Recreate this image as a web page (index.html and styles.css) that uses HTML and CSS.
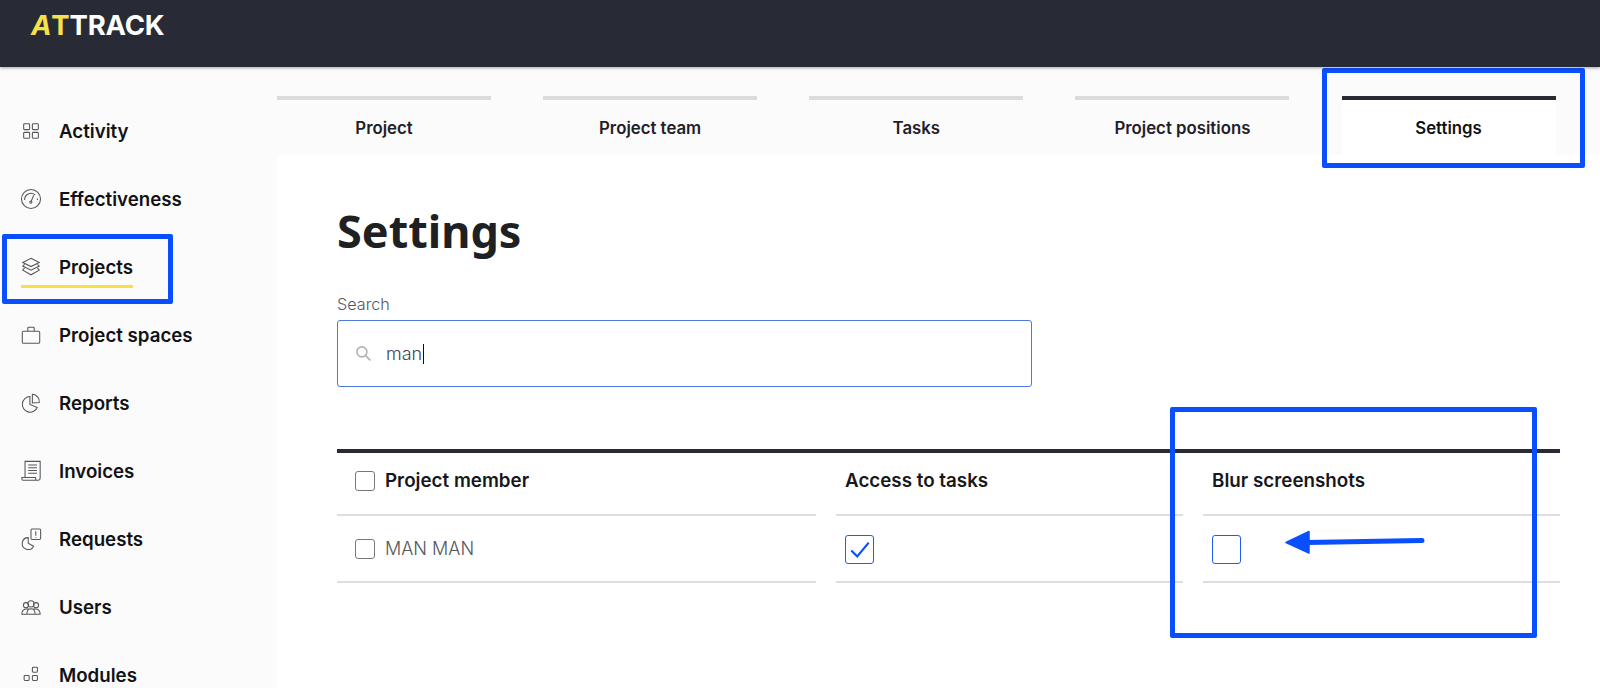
FILE: index.html
```html
<!DOCTYPE html>
<html lang="en">
<head>
<meta charset="utf-8">
<title>Attrack - Settings</title>
<link rel="stylesheet" href="styles.css">
</head>
<body>
<div class="app">
  <header class="topbar">
    <div class="logo"><span class="logo-a">A</span><span class="logo-t">T</span>TRACK</div>
  </header>
  <div class="layout">
    <aside class="sidebar">
      <nav class="nav">
        <a class="nav-item">
          <svg class="nav-icon" viewBox="0 0 24 24"><rect x="4" y="4" width="6.5" height="6.5" rx="1"/><rect x="13.5" y="4" width="6.5" height="6.5" rx="1"/><rect x="4" y="13.5" width="6.5" height="6.5" rx="1"/><rect x="13.5" y="13.5" width="6.5" height="6.5" rx="1"/></svg>
          <span class="nav-label">Activity</span>
        </a>
        <a class="nav-item">
          <svg class="nav-icon" viewBox="0 0 24 24"><circle cx="12" cy="12" r="10.4"/><path d="M5 13a7 7 0 0 1 11.500-5.500M19 11.500v1.500M15 8l-2.800 6.500"/><circle cx="11.800" cy="15.400" r="1.200"/></svg>
          <span class="nav-label">Effectiveness</span>
        </a>
        <a class="nav-item">
          <svg class="nav-icon" viewBox="0 0 24 24"><path d="M12 2.500l9 4.500-9 4.500-9-4.500z"/><path d="M5 9l-2 2 9 4.500 9-4.500-2-2"/><path d="M5 13l-2 2.500 9 5 9-5-2-2.500"/></svg>
          <span class="nav-label nav-label-active">Projects</span>
        </a>
        <a class="nav-item">
          <svg class="nav-icon" viewBox="0 0 24 24"><rect x="2.500" y="8" width="19" height="13" rx="1.500"/><path d="M8.500 8V4.500a1 1 0 0 1 1-1h5a1 1 0 0 1 1 1V8"/></svg>
          <span class="nav-label">Project spaces</span>
        </a>
        <a class="nav-item">
          <svg class="nav-icon" viewBox="0 0 24 24"><path d="M10.800 5a8.500 8.500 0 1 0 8 12L10.800 13.500z"/><path d="M13.500 2.500a8 8 0 0 1 7.500 9l-7.500.5z"/></svg>
          <span class="nav-label">Reports</span>
        </a>
        <a class="nav-item">
          <svg class="nav-icon" viewBox="0 0 24 24"><path d="M5.500 19V1.500h16.500V20a2 2 0 0 1-2 2H3.500a1.500 1.500 0 0 1-1.500-1.500V19h15v1.500a1.500 1.500 0 0 0 1.500 1.500"/><path d="M9 5.500h9.500M9 8.500h9.500M9 11.500h9.500M9 14.500h9.500"/></svg>
          <span class="nav-label">Invoices</span>
        </a>
        <a class="nav-item">
          <svg class="nav-icon" viewBox="0 0 24 24"><rect x="12" y="1" width="10.500" height="11.500" rx="1.200"/><path d="M17.200 3.500v5M17.200 10v.8"/><path d="M9 10.500a6.500 6.500 0 1 0 5.800 9.400L9 16.500z"/></svg>
          <span class="nav-label">Requests</span>
        </a>
        <a class="nav-item">
          <svg class="nav-icon" viewBox="0 0 24 24"><circle cx="6.500" cy="10" r="2.800"/><circle cx="17.500" cy="10" r="2.800"/><circle cx="12" cy="8.500" r="3.400"/><path d="M2 20c0-3 1.500-5.500 4.500-5.800h11c3 .3 4.500 2.800 4.500 5.800zM7.500 20c0-3 1.500-6 4.500-6s4.500 3 4.500 6"/></svg>
          <span class="nav-label">Users</span>
        </a>
        <a class="nav-item">
          <svg class="nav-icon" viewBox="0 0 24 24"><rect x="4.500" y="12.500" width="5.500" height="5.500" rx="1"/><rect x="13.500" y="12.500" width="5.500" height="5.500" rx="1"/><rect x="13.500" y="3.500" width="5.500" height="5.500" rx="1"/></svg>
          <span class="nav-label">Modules</span>
        </a>
      </nav>
    </aside>
    <main class="main">
      <div class="tabs">
        <a class="tab">Project</a>
        <a class="tab">Project team</a>
        <a class="tab">Tasks</a>
        <a class="tab">Project positions</a>
        <a class="tab tab-active">Settings</a>
      </div>
      <section class="content">
        <h1 class="title">Settings</h1>
        <label class="search-label">Search</label>
        <div class="search-box">
          <svg class="search-icon" viewBox="0 0 16 16"><circle cx="6.500" cy="6.500" r="4.700"/><path d="M10 10l4.500 4.500"/></svg>
          <span class="search-value">man</span><span class="caret"></span>
        </div>
        <div class="members">
          <div class="cell cell-head"><span class="check"></span>Project member</div>
          <div class="cell cell-head">Access to tasks</div>
          <div class="cell cell-head">Blur screenshots</div>
          <div class="cell cell-row"><span class="check"></span><span class="member-name">MAN MAN</span></div>
          <div class="cell cell-row">
            <span class="toggle"><svg class="tick" viewBox="0 0 24 24"><path d="M2.500 12.500l6.500 6.500L21.500 4"/></svg></span>
          </div>
          <div class="cell cell-row"><span class="toggle"></span></div>
        </div>
      </section>
    </main>
  </div>
  <div class="mark mark-settings"></div>
  <div class="mark mark-projects"></div>
  <div class="mark mark-blur"></div>
  <svg class="mark-arrow" viewBox="0 0 140 26"><path d="M1 13.500L24 2.500V24z" class="arrow-head"/><path d="M22 13.500L137 11.500" class="arrow-line"/></svg>
</div>
</body>
</html>
```

FILE: styles.css
```css
* { box-sizing: border-box; }
html, body { margin: 0; padding: 0; }
body {
  font-family: Inter, "Liberation Sans", sans-serif;
  color: #17181c;
  background: #fff;
}
.app {
  position: relative;
  width: 1600px;
  height: 688px;
  overflow: hidden;
}
.topbar {
  position: relative;
  z-index: 1;
  height: 67px;
  background: #282b35;
  box-shadow: 0 1px 3px rgba(0, 0, 0, .35);
  padding: 11px 0 0 31px;
}
.logo {
  font-size: 27.500px;
  line-height: 28px;
  font-weight: 700;
  letter-spacing: -.2px;
  color: #fff;
}
.logo-a { color: #f7e14a; font-style: italic; }
.logo-t { color: #f7e14a; }
.layout { display: flex; height: 621px; }
.sidebar {
  width: 277px;
  flex: none;
  background: #fbfbfb;
  padding-top: 30px;
}
.nav { display: flex; flex-direction: column; }
.nav-item {
  display: flex;
  align-items: center;
  gap: 17px;
  height: 68px;
  padding-left: 20px;
}
.nav-icon {
  width: 22px;
  height: 22px;
  flex: none;
  fill: none;
  stroke: #55565c;
  stroke-width: 1.150;
}
.nav-label {
  position: relative;
  font-size: 18.700px;
  font-weight: 600;
  color: #111216;
}
.nav-label-active::after {
  content: "";
  position: absolute;
  left: -38px;
  right: 0;
  bottom: -9px;
  height: 3px;
  background: #f9e04b;
}
.main { flex: 1; min-width: 0; }
.tabs {
  display: flex;
  gap: 52.150px;
  height: 88px;
  padding-top: 29px;
  background: #fbfbfb;
}
.tab {
  width: 214px;
  height: 59px;
  border-top: 4px solid #dcdcdc;
  padding-top: 19px;
  text-align: center;
  font-size: 16.800px;
  line-height: 18px;
  font-weight: 600;
  color: #1f2028;
}
.tab-active {
  border-top-color: #282b35;
  background: #fff;
  color: #101114;
}
.content { padding: 0 40px 0 60px; }
.title {
  margin: 45px 0 0;
  font-family: "Noto Sans", sans-serif;
  font-size: 45px;
  line-height: 62px;
  font-weight: 700;
  color: #1f2023;
}
.search-label {
  display: block;
  margin-top: 32px;
  font-size: 16.200px;
  line-height: 20px;
  font-weight: 300;
  color: #55565c;
}
.search-box {
  display: flex;
  align-items: center;
  width: 695px;
  height: 67px;
  margin-top: 6px;
  padding-left: 17px;
  border: 1px solid #4d78e0;
  border-radius: 3px;
}
.search-icon {
  width: 17px;
  height: 17px;
  margin-right: 14px;
  fill: none;
  stroke: #b3b3b3;
  stroke-width: 1.500;
}
.search-value {
  font-size: 18px;
  font-weight: 300;
  color: #44454a;
}
.caret {
  width: 1px;
  height: 20px;
  margin-left: 1px;
  background: #111;
}
.members {
  display: grid;
  grid-template-columns: 479px 347px 357px;
  column-gap: 20px;
  width: 1223px;
  margin-top: 62px;
  border-top: 4px solid #282b35;
}
.cell {
  display: flex;
  align-items: center;
  border-bottom: 2px solid #dedede;
}
.cell-head {
  height: 63px;
  padding-left: 9px;
  padding-bottom: 6px;
  font-size: 18.800px;
  font-weight: 600;
  color: #17181c;
}
.cell-head:first-child { padding-left: 18px; }
.cell-row {
  height: 67px;
  padding-left: 9px;
  padding-top: 2px;
}
.cell-row:nth-child(4) { padding-left: 18px; padding-top: 0; }
.check {
  width: 20px;
  height: 20px;
  flex: none;
  margin-right: 10px;
  border: 1.500px solid #77787d;
  border-radius: 3px;
}
.member-name {
  font-size: 18px;
  font-weight: 300;
  color: #55565c;
}
.toggle {
  display: flex;
  align-items: center;
  justify-content: center;
  width: 29px;
  height: 29px;
  border: 1px solid #1c5df5;
  border-radius: 3px;
}
.tick {
  width: 22px;
  height: 22px;
  fill: none;
  stroke: #0a50ff;
  stroke-width: 2.400;
}
.mark {
  position: absolute;
  border: 5px solid #0a4fff;
  border-radius: 2px;
}
.mark-settings { left: 1322px; top: 68px; width: 263px; height: 100px; }
.mark-projects { left: 2px; top: 234px; width: 171px; height: 70px; }
.mark-blur { left: 1170px; top: 407px; width: 367px; height: 231px; }
.mark-arrow {
  position: absolute;
  left: 1285px;
  top: 529px;
  width: 140px;
  height: 26px;
}
.arrow-head { fill: #0a4fff; stroke: #0a4fff; stroke-width: 1.500; stroke-linejoin: round; }
.arrow-line { fill: none; stroke: #0a4fff; stroke-width: 5; stroke-linecap: round; }
```
